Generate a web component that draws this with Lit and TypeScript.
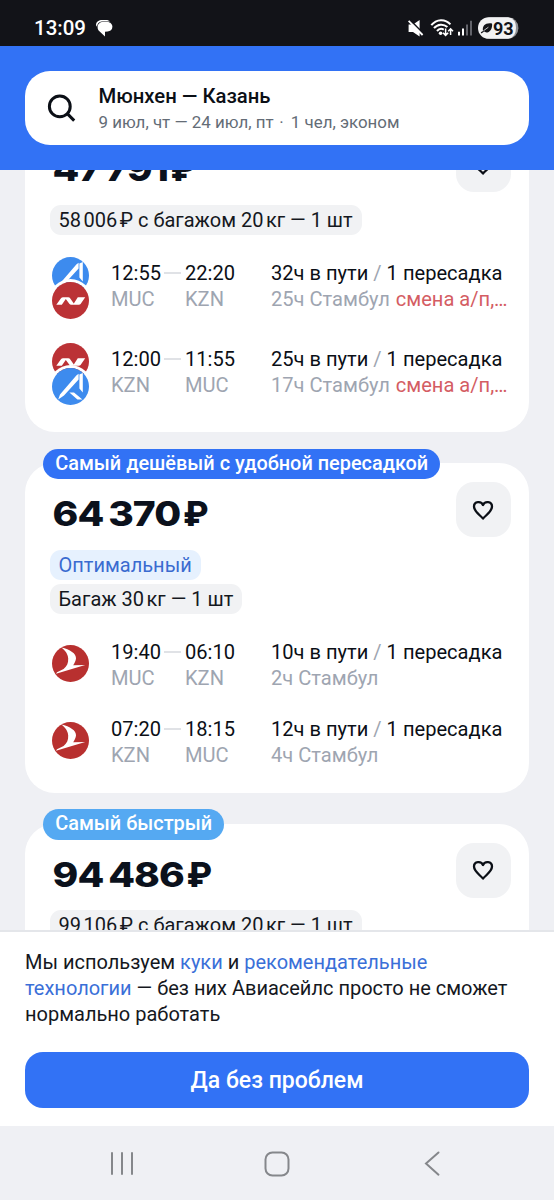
import { LitElement, html, css, svg, nothing } from "lit";
import { customElement, property } from "lit/decorators.js";

type Airline = "ajet" | "nordwind" | "turkish";
interface Leg {
  airlines: Airline[];
  depart: string;
  from: string;
  arrive: string;
  to: string;
  duration: string;
  stop: string;
  warning?: string;
}
interface Ticket {
  price: string;
  badge?: string;
  tone?: string;
  optimal?: boolean;
  baggage: string;
  legs: Leg[];
}

const THIN = "\u2009";

const tickets: Ticket[] = [
  {
    price: `47${THIN}791`,
    baggage: `58${THIN}006${THIN}₽ с багажом 20${THIN}кг — 1 шт`,
    legs: [
      { airlines: ["ajet", "nordwind"], depart: "12:55", from: "MUC", arrive: "22:20", to: "KZN", duration: "32ч в пути", stop: "25ч Стамбул", warning: "смена а/п,…" },
      { airlines: ["nordwind", "ajet"], depart: "12:00", from: "KZN", arrive: "11:55", to: "MUC", duration: "25ч в пути", stop: "17ч Стамбул", warning: "смена а/п,…" },
    ],
  },
  {
    price: `64${THIN}370`,
    badge: "Самый дешёвый с удобной пересадкой",
    tone: "deep",
    optimal: true,
    baggage: `Багаж 30${THIN}кг — 1 шт`,
    legs: [
      { airlines: ["turkish"], depart: "19:40", from: "MUC", arrive: "06:10", to: "KZN", duration: "10ч в пути", stop: "2ч Стамбул" },
      { airlines: ["turkish"], depart: "07:20", from: "KZN", arrive: "18:15", to: "MUC", duration: "12ч в пути", stop: "4ч Стамбул" },
    ],
  },
  {
    price: `94${THIN}486`,
    badge: "Самый быстрый",
    tone: "light",
    baggage: `99${THIN}106${THIN}₽ с багажом 20${THIN}кг — 1 шт`,
    legs: [],
  },
];

/** Tightens every thin space of a text by wrapping it in its own span. */
const spaced = (text: string) =>
  text.split(THIN).map((part, i) => (i ? html`<span class="thin">${THIN}</span>${part}` : part));

const marks = {
  ajet: svg`<circle cx="18.5" cy="18.5" r="18.5" fill="#3d8bee"/>
    <path d="M6.2 31.6 L8 26.4 L22.6 9.4 Q24 7.6 26.6 5.8 V11.6 L12 27.6Z M27.4 6.6 L30.8 5 V24.4 L27.4 20.6Z M17.4 24.4 L22 24.4 L30.4 31.6 H25.4Z" fill="#fff"/>`,
  nordwind: svg`<circle cx="18.5" cy="18.5" r="18.5" fill="#bb3236"/>
    <path d="M4.3 22.8 L8.8 16.4 Q9.7 15.2 11.2 15.2 H16.2 Q17.6 15.2 18.3 16.4 L21.8 21.4 L25.8 15.2 H33.2 L28.6 22 Q28 22.8 26.8 22.8 H19.2 Q18 22.8 17.3 21.8 L13.8 16.9 L9.8 22.8Z" fill="#fff"/>`,
  turkish: svg`<circle cx="18.5" cy="18.5" r="18.5" fill="#b8302f"/>
    <path d="M9.3 2.6 C18 4.6 24.4 8.6 24 13.6 C23.8 16 22.4 18.4 21.2 20.2 L33.2 20 L4 28.8 L5 27.2 L11.6 24 C15 21.4 16.4 18.2 16.2 13.6 C16 9 13 5.2 9.3 2.6Z" fill="#fff"/>`,
};

@customElement("airline-logo")
class AirlineLogo extends LitElement {
  @property() name: Airline = "turkish";
  static styles = css`
    :host { display: block; width: 37px; height: 37px; border-radius: 50%; }
    .mark { display: block; width: 37px; height: 37px; }
  `;
  render() {
    return html`<svg class="mark" viewBox="0 0 37 37">${marks[this.name]}</svg>`;
  }
}

@customElement("flight-leg")
class FlightLeg extends LitElement {
  @property({ attribute: false }) leg!: Leg;
  static styles = css`
    :host { display: grid; grid-template-columns: 59px 74px 86px 1fr; line-height: 26px; font-size: 20.1px; color: #0b0f16; white-space: nowrap; }
    .logos { padding-top: 6px; }
    .logos.pair { padding: 0 0 2px; margin-top: -3px; }
    .pair .second { margin-top: -12px; box-shadow: 0 0 0 3px #fff; position: relative; }
    .muted { color: #9ea5b1; }
    .time { display: flex; align-items: center; }
    .dash { width: 17px; height: 2px; background: #e0e2e6; margin-left: 3px; }
    .warn { color: #d45d63; margin-left: 1px; }
    .slash { color: #9ea5b1; }
  `;
  render() {
    const l = this.leg;
    return html`
      <div class="logos ${l.airlines.length > 1 ? "pair" : ""}">
        ${l.airlines.map((a, i) => html`<airline-logo class=${i ? "second" : "first"} name=${a}></airline-logo>`)}
      </div>
      <div><div class="time">${l.depart}<span class="dash"></span></div><div class="muted">${l.from}</div></div>
      <div><div>${l.arrive}</div><div class="muted">${l.to}</div></div>
      <div>
        <div>${l.duration} <span class="slash">/</span> 1 пересадка</div>
        <div class="muted">${l.stop}${l.warning ? html` <span class="warn">${l.warning}</span>` : nothing}</div>
      </div>`;
  }
}

@customElement("ticket-card")
class TicketCard extends LitElement {
  @property({ attribute: false }) ticket!: Ticket;
  static styles = css`
    :host { display: block; position: relative; box-sizing: border-box; min-height: 314px; border-radius: 30px; background: #fff; padding: 19px 18.5px 25px 24.5px; }
    .badge { position: absolute; left: 18px; top: -14.4px; height: 30.5px; line-height: 30.5px; border-radius: 16px; padding: 0 12.2px; color: #fff; font-size: 19.9px; font-weight: 500; white-space: nowrap; }
    .deep { background: #3272f5; }
    .light { background: #55a9f2; }
    .top { display: flex; justify-content: space-between; height: 55px; }
    .price { display: flex; font: 800 34.5px/63px Inter, sans-serif; letter-spacing: -0.8px; color: #0b111c; padding-left: 2.5px; transform: scaleX(1.13); transform-origin: 2.5px 0; white-space: nowrap; }
    .ruble { transform: scaleX(0.86); transform-origin: 0 0; margin-left: 2.5px; }
    .fav { width: 55px; height: 55px; border-radius: 18px; background: #f1f2f4; display: grid; place-items: center; }
    .heart { width: 24px; height: 24px; }
    .chips { display: flex; flex-direction: column; align-items: flex-start; gap: 3.5px; margin-top: 12.5px; }
    .chip { height: 30.5px; line-height: 31px; border-radius: 11px; padding: 0 9px; font-size: 20px; color: #15181e; background: #f1f2f4; white-space: nowrap; }
    .chip .thin { margin-right: -1.6px; }
    .optimal { color: #3a6bd0; background: #e6f1fe; }
    .legs { display: flex; flex-direction: column; gap: 25px; margin-top: 24.5px; padding-left: 2.5px; }
  `;
  render() {
    const t = this.ticket;
    return html`
      ${t.badge ? html`<div class="badge ${t.tone}">${t.badge}</div>` : nothing}
      <div class="top">
        <div class="price"><span>${t.price}</span><span class="ruble">₽</span></div>
        <div class="fav">
          <svg class="heart" viewBox="0 0 24 24" fill="none" stroke="#0b0f16" stroke-width="2.3" stroke-linejoin="round">
            <path d="M12 7 C10.4 2.8 3 2.9 3 8.6 C3 13.2 8 16.2 12 20.6 C16 16.2 21 13.2 21 8.6 C21 2.9 13.6 2.8 12 7Z"/>
          </svg>
        </div>
      </div>
      <div class="chips">
        ${t.optimal ? html`<div class="chip optimal">Оптимальный</div>` : nothing}
        <div class="chip">${spaced(t.baggage)}</div>
      </div>
      <div class="legs">${t.legs.map((l) => html`<flight-leg .leg=${l}></flight-leg>`)}</div>`;
  }
}

@customElement("app-root")
class AppRoot extends LitElement {
  static styles = css`
    :host { display: flex; flex-direction: column; width: 554px; height: 1200px; overflow: hidden; background: #eff0f4; font-family: Roboto, "Noto Sans", sans-serif; }
    .status { height: 46px; flex: none; box-sizing: border-box; background: #121318; color: #fff; display: flex; align-items: center; padding: 10px 34px 0; }
    .clock { font-size: 20.5px; font-weight: 500; line-height: 24px; width: 61px; }
    .chat { width: 18px; height: 18px; }
    .tray { margin-left: auto; width: 112px; height: 24px; }
    .header { height: 123.5px; flex: none; box-sizing: border-box; background: #3272f5; padding: 25px 25px 0; }
    .search { height: 74px; box-sizing: border-box; border-radius: 25px; background: #fff; display: flex; padding: 12px 22px; }
    .glass { width: 30px; height: 30px; margin: 10px 21.5px 0 0; }
    .route { font-size: 20.3px; font-weight: 500; line-height: 26px; color: #0b0f16; }
    .trip { font-size: 16.9px; line-height: 26px; color: #646c76; }
    .dot { margin: 0 3px 0 1.5px; }
    .results { flex: 1; min-height: 0; overflow: hidden; padding: 0 25px; }
    .list { display: flex; flex-direction: column; gap: 31px; margin-top: -51.2px; }
    .first { height: 314px; }
    .middle { height: 329.2px; }
    .cookies { height: 196px; flex: none; box-sizing: border-box; background: #fff; border-top: 2px solid #e4e6ea; padding: 17px 25px 0; }
    .text { margin: 0; font-size: 20px; line-height: 26px; color: #15181e; white-space: nowrap; }
    .link { color: #3a6fd8; }
    .accept { display: block; width: 100%; height: 56px; margin-top: 25px; padding: 2px 0 0; border: 0; border-radius: 18px; background: #3272f5; color: #fff; font: 500 23px/54px Roboto, sans-serif; }
    .nav { height: 74px; flex: none; }
    .keys { display: block; width: 554px; height: 74px; }
    .pct { font: 700 18px Roboto, sans-serif; }
  `;
  render() {
    return html`
      <div class="status">
        <div class="clock">13:09</div>
        <svg class="chat" viewBox="0 0 18 18">
          <path d="M1 6.2 C1 2.6 4 1 7.2 1 H11 C13 1 14 1.6 14.8 2.4 H8 C4.5 2.4 2.4 4 2 7.8Z" fill="#fff"/>
          <path d="M2.6 8.2 C2.6 5 5 3 8 3 H12.4 C15.4 3 17.4 5.2 17.4 7.8 C17.4 10.6 15.2 12.4 12.6 12.6 L10 12.8 V17.4 L4.4 12.2 C3.2 11.2 2.6 9.8 2.6 8.2Z" fill="#fff"/>
        </svg>
        <svg class="tray" viewBox="408 16 112 24">
          <path d="M408.6 24.4 H413 L419.6 20 V36.4 L413 32 H408.6Z" fill="#fff"/>
          <path d="M409.4 19.4 L423.4 33.6" stroke="#121318" stroke-width="1.6"/>
          <path d="M408.6 20.8 L422.6 35" stroke="#fff" stroke-width="1.8"/>
          <g fill="none" stroke="#fff" stroke-width="2">
            <path d="M431.3 25.2 C436.4 18.6 445.4 18.6 450.4 24.4"/>
            <path d="M434 28.2 C437.6 23.8 443.6 23.6 447.4 27"/>
            <path d="M437 31 C439 28.6 441.6 28.4 443.8 29.6"/>
          </g>
          <circle cx="440.6" cy="33.2" r="1.8" fill="#fff"/>
          <path d="M445.6 28.4 V35 M443 32.8 L445.6 35.4 L448.2 32.8 M450.6 35 V28.8 M448.2 31.2 L450.6 28.8 L453 31.2" fill="none" stroke="#fff" stroke-width="1.5"/>
          <path d="M459 31.8 V35.4 M463 28.4 V35.4" stroke="#fff" stroke-width="2"/>
          <path d="M467 24.4 V35.4 M471 20.8 V35.4" stroke="#62636a" stroke-width="2"/>
          <rect x="480" y="17.2" width="38.4" height="21.6" rx="10.6" fill="#8f9094"/>
          <path d="M488.8 17.2 H508 Q516 18.4 516 28 Q516 37.6 508 38.8 H488.8 A10.8 10.8 0 0 1 488.8 17.2Z" fill="#f2f2f3"/>
          <path d="M483 31 C482 25.4 485.6 22.4 492 23.4 C492.6 26 491.4 31.6 487.4 32.4 C485.8 32.6 484.8 32.2 484.2 31.6 L481.4 33.4 L480.8 32.2Z" fill="#121318"/>
          <path d="M483.4 30.8 L488.4 27.2" stroke="#f2f2f3" stroke-width="0.8"/>
          <text class="pct" x="493" y="34.5" fill="#121318">93</text>
        </svg>
      </div>
      <div class="header">
        <div class="search">
          <svg class="glass" viewBox="0 0 30 30" fill="none" stroke="#0b0f16" stroke-width="3">
            <circle cx="12.8" cy="13.4" r="10.4"/><path d="M20 20.4 L27.2 27.6"/>
          </svg>
          <div>
            <div class="route">Мюнхен — Казань</div>
            <div class="trip">9 июл, чт — 24 июл, пт <span class="dot">·</span> 1 чел, эконом</div>
          </div>
        </div>
      </div>
      <div class="results">
        <div class="list">
          <ticket-card class="first" .ticket=${tickets[0]}></ticket-card>
          <ticket-card class="middle" .ticket=${tickets[1]}></ticket-card>
          <ticket-card .ticket=${tickets[2]}></ticket-card>
        </div>
      </div>
      <div class="cookies">
        <p class="text">Мы используем <span class="link">куки</span> и <span class="link">рекомендательные<br>технологии</span> — без них Авиасейлс просто не сможет<br>нормально работать</p>
        <button class="accept">Да без проблем</button>
      </div>
      <div class="nav">
        <svg class="keys" viewBox="0 0 554 74" fill="none" stroke="#85878b" stroke-width="2" stroke-linecap="round">
          <path d="M112 27 V48 M122 27 V48 M132 27 V48"/>
          <rect x="265.5" y="26.5" width="23" height="23" rx="7"/>
          <path d="M438.5 26.5 L426 37.5 L438.5 48.7"/>
        </svg>
      </div>`;
  }
}
